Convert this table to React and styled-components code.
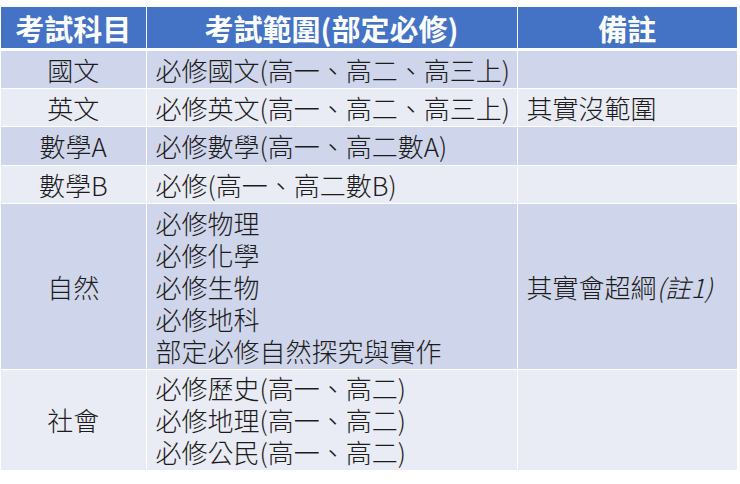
import React from 'react'
import styled, { createGlobalStyle } from 'styled-components'

const GlobalStyle = createGlobalStyle`
  html, body {
    margin: 0;
    padding: 0;
    background: #ffffff;
  }
  body {
    font-family: "Noto Sans CJK TC", "Noto Sans", sans-serif;
  }
`

const rows = [
  { subject: '國文', range: ['必修國文(高一、高二、高三上)'], note: '', height: 39 },
  { subject: '英文', range: ['必修英文(高一、高二、高三上)'], note: '其實沒範圍', height: 38 },
  { subject: '數學A', range: ['必修數學(高一、高二數A)'], note: '', height: 39 },
  { subject: '數學B', range: ['必修(高一、高二數B)'], note: '', height: 38 },
  {
    subject: '自然',
    range: ['必修物理', '必修化學', '必修生物', '必修地科', '部定必修自然探究與實作'],
    note: 'over',
    height: 166,
  },
  {
    subject: '社會',
    range: ['必修歷史(高一、高二)', '必修地理(高一、高二)', '必修公民(高一、高二)'],
    note: '',
    height: 100,
  },
]

function App() {
  return (
    <>
      <GlobalStyle />
      <Page>
        <Table>
          <colgroup>
            <col style={{ width: 145 }} />
            <col style={{ width: 371 }} />
            <col style={{ width: 220 }} />
          </colgroup>
          <thead>
            <tr>
              <Head>考試科目</Head>
              <Head>考試範圍(部定必修)</Head>
              <Head>備註</Head>
            </tr>
          </thead>
          <tbody>
            {rows.map((r, i) => (
              <Row key={r.subject} $band={i % 2 === 0} $h={r.height}>
                <Cell $center>{r.subject}</Cell>
                <Cell>
                  {r.range.map((line) => (
                    <Line key={line}>{line}</Line>
                  ))}
                </Cell>
                <Cell>
                  {r.note === 'over' ? (
                    <>
                      其實會超綱<Em>(註1)</Em>
                    </>
                  ) : (
                    r.note
                  )}
                </Cell>
              </Row>
            ))}
          </tbody>
        </Table>
      </Page>
    </>
  )
}

export default App

const Page = styled.div`
  width: 740px;
  height: 484px;
  padding: 7px 0 0 1px;
  box-sizing: border-box;
`

const Table = styled.table`
  width: 736px;
  table-layout: fixed;
  border-collapse: collapse;
  color: #1c1c1c;
`

const Head = styled.th`
  height: 41px;
  padding: 0;
  background: #4472c4;
  color: #ffffff;
  font-size: 29px;
  font-weight: 700;
  text-align: center;
  vertical-align: middle;
  line-height: 38px;
  border-left: 1px solid #ffffff;
  border-bottom: 3px solid #ffffff;
  &:first-child {
    border-left: none;
  }
`

const Row = styled.tr`
  height: ${(p) => p.$h}px;
  background: ${(p) => (p.$band ? '#cfd5ea' : '#e9ebf5')};
`

const Cell = styled.td`
  padding: 0 9px;
  font-size: 26px;
  font-weight: 300;
  line-height: 32px;
  text-align: ${(p) => (p.$center ? 'center' : 'left')};
  vertical-align: middle;
  white-space: nowrap;
  border-left: 1px solid #ffffff;
  border-top: 1px solid #ffffff;
  &:first-child {
    border-left: none;
  }
`

const Line = styled.div``

const Em = styled.span`
  font-style: italic;
`
